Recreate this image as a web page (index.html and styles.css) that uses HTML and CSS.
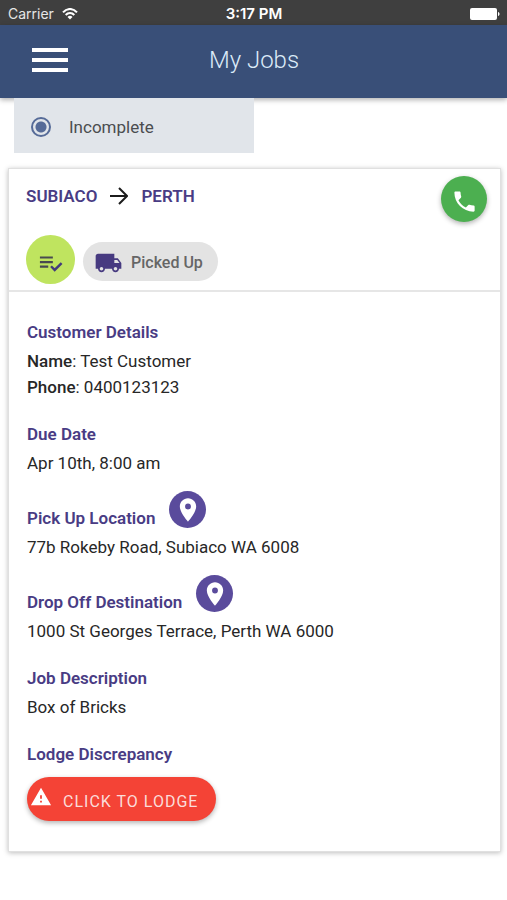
FILE: index.html
```html
<!DOCTYPE html>
<html lang="en">
<head>
<meta charset="utf-8">
<meta name="viewport" content="width=device-width, initial-scale=1">
<title>My Jobs</title>
<link rel="stylesheet" href="styles.css">
</head>
<body>
<div class="status">
  <div class="carrier">
    <span>Carrier</span>
    <svg width="16" height="12" viewBox="0 0 16 12" fill="none" stroke="#fff" stroke-width="2" aria-hidden="true"><path d="M1 4.400C5-.2 11-.2 15 4.400M3.700 7c2.400-2.700 6.200-2.700 8.600 0"/><path d="M8 11.500 5.500 8.900c1.400-1.400 3.600-1.400 5 0z" fill="#fff" stroke="none"/></svg>
  </div>
  <span class="clock">3:17 PM</span>
  <svg class="battery" width="30" height="12" viewBox="0 0 30 12" fill="#fff" aria-hidden="true"><rect width="27" height="12" rx="2"/><path d="M28 4c2 .5 2 3.500 0 4z"/></svg>
</div>
<header class="nav">
  <button class="menu" type="button" aria-label="Menu"><svg width="36" height="24" viewBox="0 0 36 24" fill="#fff"><path d="M0 0h36v4H0zM0 10h36v4H0zM0 20h36v4H0z"/></svg></button>
  <h1>My Jobs</h1>
</header>
<main>
  <label class="filter"><input type="radio" name="filter" checked><span>Incomplete</span></label>
  <article class="card">
    <div class="top">
      <div class="route-row">
        <h2 class="route">
          <span>SUBIACO</span>
          <svg width="18" height="18" viewBox="0 0 18 18" fill="none" stroke="#1c1c1c" stroke-width="2" aria-label="to"><path d="M0 9h17M9 1l8 8-8 8"/></svg>
          <span>PERTH</span>
        </h2>
        <a class="call" href="tel:0400123123" aria-label="Call customer"><svg width="27" height="27" viewBox="0 0 24 24" fill="#fff"><path d="M6.620 10.790c1.440 2.830 3.760 5.140 6.590 6.590l2.200-2.200c.27-.27.67-.36 1.020-.24 1.120.37 2.330.57 3.570.57.55 0 1 .45 1 1V20c0 .55-.45 1-1 1-9.390 0-17-7.610-17-17 0-.55.45-1 1-1h3.500c.55 0 1 .45 1 1 0 1.250.2 2.450.57 3.570.11.35.03.74-.25 1.020z"/></svg></a>
      </div>
      <div class="state">
        <button class="check" type="button" aria-label="Checklist"><svg width="24" height="17" viewBox="0 0 26 18"><path d="M1 2.500h14M1 7.500h14M1 12.500h9" fill="none" stroke="#484a50" stroke-width="2.400"/><path d="m13 12 4 4 7.500-7.500" fill="none" stroke="#433b7c" stroke-width="2.600"/></svg></button>
        <span class="chip"><svg width="29" height="28" viewBox="0 0 24 24" fill="#473a80" aria-hidden="true"><path d="M20 8h-3V4H3c-1.100 0-2 .9-2 2v11h2c0 1.660 1.340 3 3 3s3-1.340 3-3h6c0 1.660 1.340 3 3 3s3-1.340 3-3h2v-5l-3-4zM6 18.500c-.83 0-1.500-.67-1.500-1.500s.67-1.500 1.500-1.500 1.500.67 1.500 1.500-.67 1.500-1.500 1.500zm13.500-9 1.960 2.500H17V9.500h2.500zm-1.500 9c-.83 0-1.500-.67-1.500-1.500s.67-1.500 1.500-1.500 1.500.67 1.500 1.500-.67 1.500-1.500 1.500z"/></svg>Picked Up</span>
      </div>
    </div>
    <div class="details">
      <section>
        <h3>Customer Details</h3>
        <p><b>Name</b>: Test Customer</p>
        <p><b>Phone</b>: 0400123123</p>
      </section>
      <section>
        <h3>Due Date</h3>
        <p>Apr 10th, 8:00 am</p>
      </section>
      <section class="place">
        <div class="place-head">
          <h3>Pick Up Location</h3>
          <button class="pin" type="button" aria-label="Map of pick up location"><svg width="28" height="28" viewBox="0 0 24 24" fill="#fff"><path d="M12 2C8.130 2 5 5.130 5 9c0 5.250 7 13 7 13s7-7.750 7-13c0-3.870-3.130-7-7-7zm0 9.500a2.500 2.500 0 1 1 0-5 2.500 2.500 0 0 1 0 5z"/></svg></button>
        </div>
        <p>77b Rokeby Road, Subiaco WA 6008</p>
      </section>
      <section class="place">
        <div class="place-head">
          <h3>Drop Off Destination</h3>
          <button class="pin" type="button" aria-label="Map of drop off destination"><svg width="28" height="28" viewBox="0 0 24 24" fill="#fff"><path d="M12 2C8.130 2 5 5.130 5 9c0 5.250 7 13 7 13s7-7.750 7-13c0-3.870-3.130-7-7-7zm0 9.500a2.500 2.500 0 1 1 0-5 2.500 2.500 0 0 1 0 5z"/></svg></button>
        </div>
        <p>1000 St Georges Terrace, Perth WA 6000</p>
      </section>
      <section>
        <h3>Job Description</h3>
        <p>Box of Bricks</p>
      </section>
      <section>
        <h3>Lodge Discrepancy</h3>
        <button class="lodge" type="button"><svg width="22" height="22" viewBox="0 0 24 24" fill="#fff" aria-hidden="true"><path d="M1 21h22L12 2 1 21zm12-3h-2v-2h2v2zm0-4h-2v-4h2v4z"/></svg><span>CLICK TO LODGE</span></button>
      </section>
    </div>
  </article>
</main>
</body>
</html>
```
FILE: styles.css
```css
* { box-sizing: border-box; }
body {
  margin: 0;
  background: #fff;
  color: #272727;
  font: 17px/26px Roboto, sans-serif;
}
h1, h2, h3, p { margin: 0; }
svg { display: block; flex: none; }
button {
  border: 0;
  padding: 0;
  font: inherit;
  cursor: pointer;
}

.status {
  display: grid;
  grid-template-columns: 1fr auto 1fr;
  align-items: center;
  height: 25px;
  padding: 2px 7px 0 8px;
  background: #3f3f3f;
  color: #fff;
  font: 15px/20px Inter, sans-serif;
}
.carrier {
  display: flex;
  align-items: center;
  gap: 8px;
  color: #e6e6e6;
  font-size: 14px;
}
.clock { font-weight: 600; }
.battery { justify-self: end; }

.nav {
  position: relative;
  display: grid;
  grid-template-columns: 1fr auto 1fr;
  align-items: center;
  height: 73px;
  padding: 0 31px 3px 32px;
  background: #394f78;
  box-shadow: 0 2px 5px rgba(0, 0, 0, .3);
}
.menu {
  justify-self: start;
  background: none;
}
.nav h1 {
  color: #dcebf8;
  font-size: 24px;
  font-weight: 300;
  line-height: 32px;
}

.filter {
  position: relative;
  display: flex;
  align-items: center;
  gap: 18px;
  width: 240px;
  height: 55px;
  margin-left: 14px;
  padding: 2px 17px 0;
  background: #e1e5ea;
  color: #4b4d50;
}
.filter input {
  appearance: none;
  width: 20px;
  height: 20px;
  margin: 0;
  border: 2px solid #566b98;
  border-radius: 50%;
  background: radial-gradient(circle, #566b98 5px, transparent 6px);
}

.card {
  margin: 15px 6px 48px 8px;
  border: 1px solid #e0e0e0;
  background: #fff;
  box-shadow: 0 1px 5px rgba(0, 0, 0, .26);
}
.top {
  padding: 7px 13px 6px 17px;
  border-bottom: 2px solid #e6e6e6;
}
.route-row {
  display: flex;
  justify-content: space-between;
  align-items: flex-start;
}
.route {
  display: flex;
  align-items: center;
  gap: 13px;
  padding-top: 7px;
  color: #493c84;
  font-size: 17px;
  font-weight: 600;
  line-height: 26px;
}
.call {
  display: grid;
  place-items: center;
  width: 46px;
  height: 46px;
  padding-top: 5px;
  border-radius: 50%;
  background: #4caf50;
  box-shadow: 0 2px 5px rgba(0, 0, 0, .3);
}
.state {
  display: flex;
  align-items: center;
  gap: 8px;
  margin-top: 13px;
}
.check {
  display: grid;
  place-items: center;
  width: 49px;
  height: 49px;
  padding-top: 8px;
  border-radius: 50%;
  background: #bfe45f;
}
.chip {
  display: flex;
  align-items: center;
  gap: 8px;
  height: 39px;
  margin-top: 3px;
  padding: 3px 15px 0 11px;
  border-radius: 20px;
  background: #e3e3e3;
  color: #666;
  font-size: 16px;
  font-weight: 500;
}

.details { padding: 24px 18px 30px; }
section + section { margin-top: 18px; }
section + .place { margin-top: 15px; }
h3 {
  color: #493c84;
  font-size: 17px;
  font-weight: 600;
  line-height: 32px;
}
b { font-weight: 500; }
.place-head {
  display: flex;
  align-items: flex-end;
  gap: 14px;
}
.pin {
  display: grid;
  place-items: center;
  width: 37px;
  height: 37px;
  margin-bottom: 6px;
  border-radius: 50%;
  background: #5a4b9c;
}
.lodge {
  display: flex;
  gap: 11px;
  height: 44px;
  margin-top: 7px;
  padding: 9px 18px 0 3px;
  border-radius: 22px;
  background: #f44336;
  box-shadow: 0 2px 5px rgba(0, 0, 0, .3);
  color: #fbdcda;
  font-size: 16px;
  letter-spacing: 1px;
}
.lodge span { padding-top: 3px; }
```
